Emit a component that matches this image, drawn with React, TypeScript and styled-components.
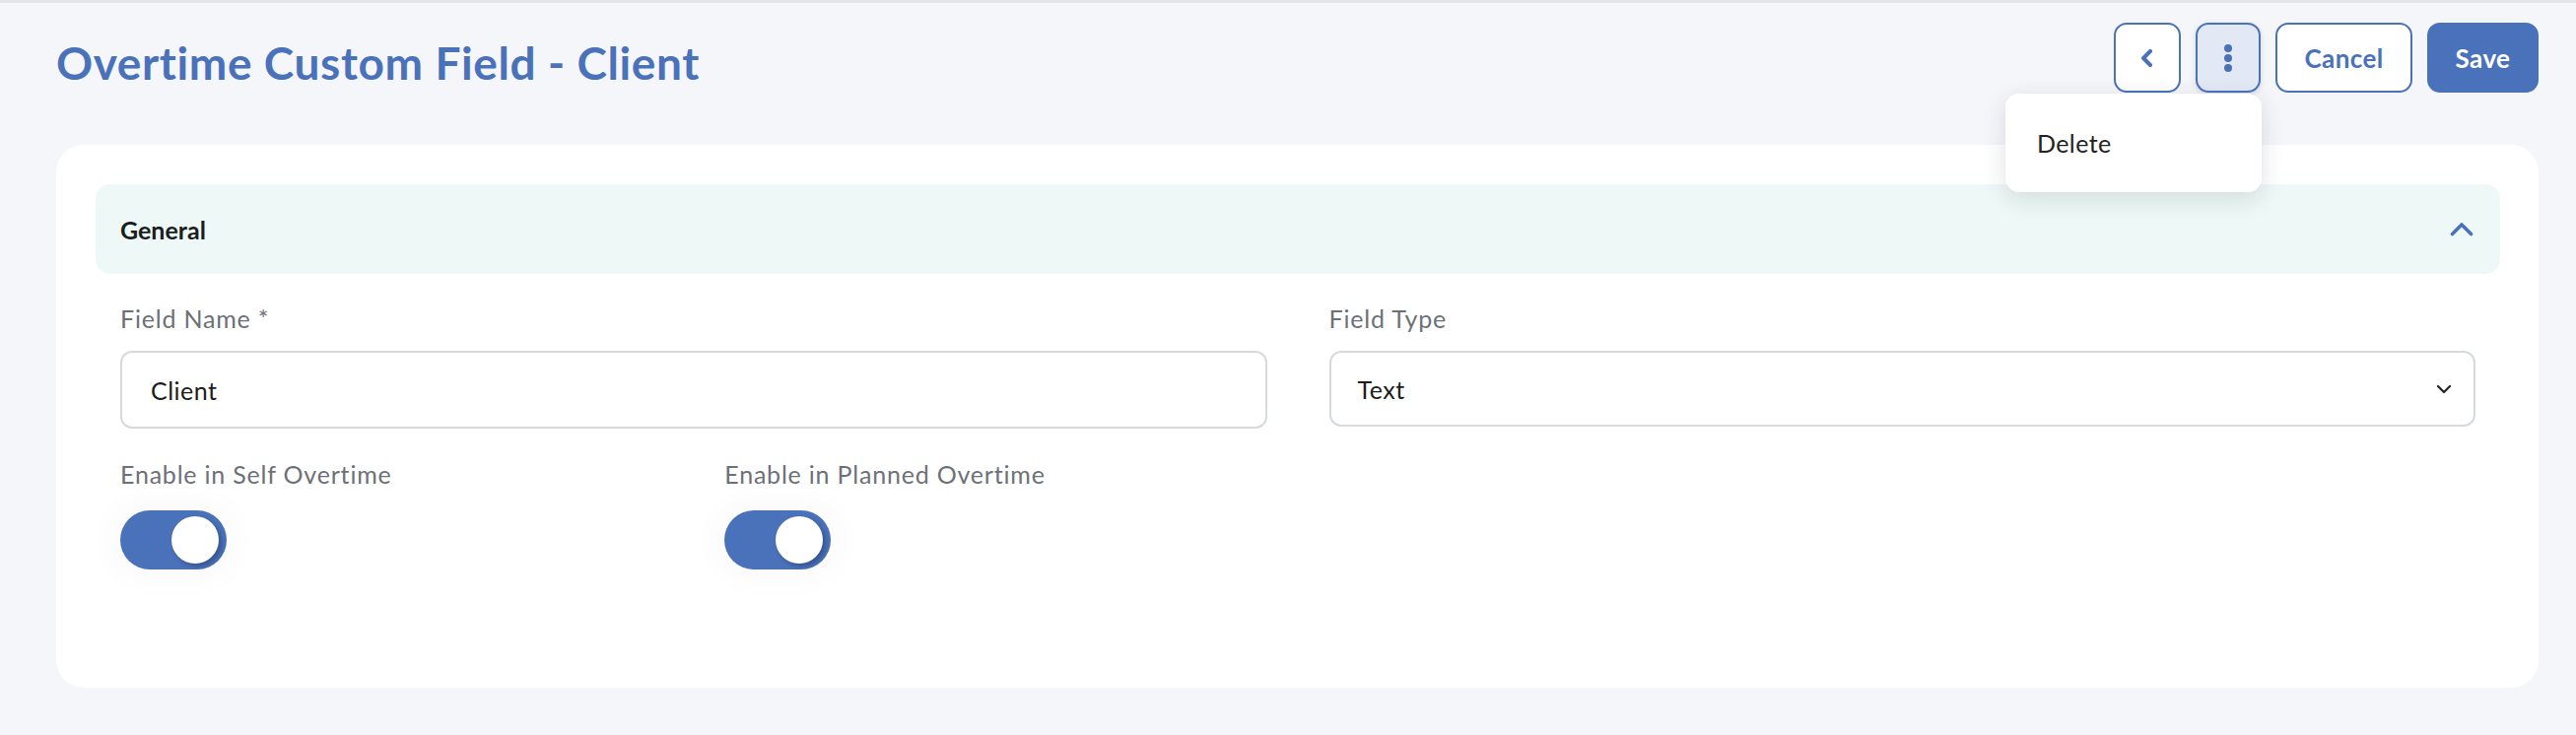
import { useState } from "react";
import styled, { createGlobalStyle } from "styled-components";

const BLUE = "#4a72ba";

const GlobalStyle = createGlobalStyle`
  html, body {
    margin: 0;
    padding: 0;
    background: #f5f6fa;
    font-family: Lato, "Open Sans", sans-serif;
  }
  * {
    box-sizing: border-box;
  }
`;

const Page = styled.div`
  min-height: 746px;
  border-top: 3px solid #e4e5e8;
  padding: 20px 38px 40px 57px;
`;

const HeaderRow = styled.div`
  display: flex;
  align-items: flex-start;
  justify-content: space-between;
  height: 124px;
`;

const Title = styled.h1`
  margin: 18px 0 0;
  font-size: 46px;
  line-height: 1;
  font-weight: 700;
  letter-spacing: 0.6px;
  color: ${BLUE};
`;

const Actions = styled.div`
  display: flex;
  gap: 15px;
  position: relative;
`;

const IconButton = styled.button<{ $active?: boolean }>`
  display: flex;
  align-items: center;
  justify-content: center;
  width: ${(p) => (p.$active ? 66 : 68)}px;
  height: 71px;
  border: 2px solid ${BLUE};
  border-radius: 13px;
  background: ${(p) => (p.$active ? "#e3e9f4" : "#fff")};
  box-shadow: ${(p) => (p.$active ? "0 2px 6px rgba(0,0,0,0.12)" : "none")};
  color: ${BLUE};
  padding: 0;
  cursor: pointer;
`;

const TextButton = styled.button<{ $primary?: boolean; $width: number }>`
  width: ${(p) => p.$width}px;
  height: 71px;
  padding: 0;
  border: 2px solid ${BLUE};
  border-radius: 13px;
  background: ${(p) => (p.$primary ? BLUE : "#fff")};
  color: ${(p) => (p.$primary ? "#fff" : BLUE)};
  font-family: Lato, sans-serif;
  font-size: 26px;
  font-weight: 700;
  letter-spacing: 0.4px;
  cursor: pointer;
`;

const Menu = styled.div`
  position: absolute;
  top: 72px;
  right: 281px;
  width: 260px;
  height: 100px;
  background: #fff;
  border-radius: 14px;
  box-shadow: 0 6px 24px rgba(30, 40, 60, 0.14);
  display: flex;
  align-items: center;
  padding: 0 32px;
  z-index: 5;
`;

const MenuItem = styled.div`
  font-size: 25px;
  letter-spacing: 0.4px;
  color: #222;
`;

const Card = styled.div`
  background: #fff;
  border-radius: 28px;
  padding: 40px 39px 120px 40px;
`;

const SectionHeader = styled.div`
  display: flex;
  align-items: center;
  justify-content: space-between;
  height: 91px;
  padding: 0 27px 0 25px;
  background: #eef8f6;
  border-radius: 15px;
`;

const SectionTitle = styled.span`
  font-size: 25px;
  font-weight: 700;
  color: #1b1d1f;
`;

const Form = styled.div`
  display: grid;
  grid-template-columns: repeat(4, 1fr);
  column-gap: 63px;
  row-gap: 31px;
  padding: 30px 25px 0;
`;

const Field = styled.div<{ $span: number }>`
  grid-column: span ${(p) => p.$span};
  display: flex;
  flex-direction: column;
`;

const Label = styled.label<{ $gap: number }>`
  font-size: 25px;
  line-height: 30px;
  letter-spacing: 0.8px;
  color: #6c7177;
  margin-bottom: ${(p) => p.$gap}px;
`;

const Input = styled.input`
  height: 79px;
  border: 2px solid #d6dadd;
  border-radius: 12px;
  padding: 0 29px;
  font-family: Lato, sans-serif;
  font-size: 25px;
  letter-spacing: 0.5px;
  color: #1c1c1c;
  outline: none;
`;

const SelectBox = styled.div`
  height: 77px;
  border: 2px solid #d6dadd;
  border-radius: 12px;
  padding: 0 22px 0 27px;
  display: flex;
  align-items: center;
  justify-content: space-between;
  font-size: 25px;
  letter-spacing: 0.5px;
  color: #1c1c1c;
`;

const Track = styled.button<{ $on: boolean }>`
  position: relative;
  width: 108px;
  height: 60px;
  border: none;
  border-radius: 30px;
  background: ${(p) => (p.$on ? BLUE : "#c9ced6")};
  box-shadow: 0 0 28px 14px rgba(0, 0, 0, 0.018);
  padding: 0;
  cursor: pointer;
`;

const Knob = styled.span<{ $on: boolean }>`
  position: absolute;
  top: 6px;
  left: ${(p) => (p.$on ? 52 : 6)}px;
  width: 48px;
  height: 48px;
  border-radius: 50%;
  background: #fff;
  box-shadow: 3px 3px 5px rgba(20, 30, 60, 0.35);
`;

function Toggle({ defaultOn }: { defaultOn: boolean }) {
  const [on, setOn] = useState(defaultOn);
  return (
    <Track $on={on} onClick={() => setOn(!on)}>
      <Knob $on={on} />
    </Track>
  );
}

export default function App() {
  return (
    <>
      <GlobalStyle />
      <Page>
        <HeaderRow>
          <Title>Overtime Custom Field - Client</Title>
          <Actions>
            <IconButton title="Back">
              <svg width="14" height="18" viewBox="0 0 14 18">
                <polyline
                  points="10,2 3,9 10,16"
                  fill="none"
                  stroke={BLUE}
                  strokeWidth="4"
                  strokeLinecap="round"
                  strokeLinejoin="round"
                />
              </svg>
            </IconButton>
            <IconButton $active title="More">
              <svg width="10" height="30" viewBox="0 0 10 30">
                <circle cx="5" cy="5" r="4" fill={BLUE} />
                <circle cx="5" cy="15" r="4" fill={BLUE} />
                <circle cx="5" cy="25" r="4" fill={BLUE} />
              </svg>
            </IconButton>
            <TextButton $width={139}>Cancel</TextButton>
            <TextButton $primary $width={113}>
              Save
            </TextButton>
            <Menu>
              <MenuItem>Delete</MenuItem>
            </Menu>
          </Actions>
        </HeaderRow>

        <Card>
          <SectionHeader>
            <SectionTitle>General</SectionTitle>
            <svg width="24" height="15" viewBox="0 0 24 15">
              <polyline
                points="2.5,12.5 12,3 21.5,12.5"
                fill="none"
                stroke={BLUE}
                strokeWidth="3.6"
                strokeLinecap="round"
                strokeLinejoin="round"
              />
            </svg>
          </SectionHeader>

          <Form>
            <Field $span={2}>
              <Label $gap={18}>Field Name *</Label>
              <Input defaultValue="Client" />
            </Field>
            <Field $span={2}>
              <Label $gap={18}>Field Type</Label>
              <SelectBox>
                <span>Text</span>
                <svg width="16" height="10" viewBox="0 0 16 10">
                  <polyline
                    points="2,2 8,8 14,2"
                    fill="none"
                    stroke="#222"
                    strokeWidth="2.2"
                    strokeLinecap="round"
                    strokeLinejoin="round"
                  />
                </svg>
              </SelectBox>
            </Field>
            <Field $span={1}>
              <Label $gap={22}>Enable in Self Overtime</Label>
              <Toggle defaultOn />
            </Field>
            <Field $span={1}>
              <Label $gap={22}>Enable in Planned Overtime</Label>
              <Toggle defaultOn />
            </Field>
          </Form>
        </Card>
      </Page>
    </>
  );
}
